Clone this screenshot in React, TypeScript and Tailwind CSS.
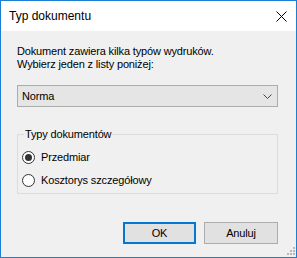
import React from "react";

export default function App() {
  const font = { fontFamily: '"Liberation Sans", Arial, sans-serif' };
  return (
    <div
      className="w-[297px] h-[258px] border border-[#1a7ed4] flex flex-col bg-[#f0f0f0] text-[11px] tracking-[-0.15px] text-black"
      style={font}
    >
      <div className="h-[30px] bg-white flex items-center justify-between pl-[8px] pr-[9px] shrink-0">
        <span className="text-[12px] tracking-normal leading-none">Typ dokumentu</span>
        <svg width="11" height="11" viewBox="0 0 11 11">
          <path d="M0.5 0.5 L10.5 10.5 M10.5 0.5 L0.5 10.5" stroke="#000" strokeWidth="1" />
        </svg>
      </div>
      <div className="flex-1 flex flex-col pl-[16px] pr-[18px] pt-[14px] relative">
        <div className="leading-[13px]">
          <div>Dokument zawiera kilka typów wydruków.</div>
          <div>Wybierz jeden z listy poniżej:</div>
        </div>
        <div className="mt-[14px] h-[22px] border border-[#acacac] bg-[#e5e5e5] flex items-center justify-between pl-[4px] pr-[5px]">
          <span>Norma</span>
          <svg width="9" height="5" viewBox="0 0 9 5">
            <path d="M0.5 0.5 L4.5 4.5 L8.5 0.5" stroke="#444" strokeWidth="1" fill="none" />
          </svg>
        </div>
        <div className="mt-[27px] h-[60px] border border-[#dcdcdc] relative">
          <span className="absolute left-[6px] top-[-8px] bg-[#f0f0f0] px-[1px] leading-[14px]">
            Typy dokumentów
          </span>
          <div className="flex flex-col pt-[15px] pl-[4px] gap-[9px]">
            <label className="flex items-center gap-[6px] h-[14px] leading-[14px]">
              <span className="w-[13px] h-[13px] rounded-full border border-[#333] bg-white flex items-center justify-center">
                <span className="w-[7px] h-[7px] rounded-full bg-[#333]" />
              </span>
              <span>Przedmiar</span>
            </label>
            <label className="flex items-center gap-[6px] h-[14px] leading-[14px]">
              <span className="w-[13px] h-[13px] rounded-full border border-[#333] bg-white" />
              <span>Kosztorys szczegółowy</span>
            </label>
          </div>
        </div>
        <div className="mt-[28px] flex justify-end gap-[8px]">
          <button className="w-[73px] h-[22px] border-2 border-[#0078d7] bg-[#e1e1e1] flex items-center justify-center">
            OK
          </button>
          <button className="w-[74px] h-[22px] border border-[#adadad] bg-[#e1e1e1] flex items-center justify-center">
            Anuluj
          </button>
        </div>
        <svg width="10" height="10" viewBox="0 0 10 10" className="absolute right-[1px] bottom-[1px]">
          {[
            [8, 0],
            [8, 3],
            [5, 3],
            [8, 6],
            [5, 6],
            [2, 6],
          ].map(([x, y], i) => (
            <rect key={i} x={x} y={y + 1} width="2" height="2" fill="#b9b9b9" />
          ))}
        </svg>
      </div>
    </div>
  );
}
